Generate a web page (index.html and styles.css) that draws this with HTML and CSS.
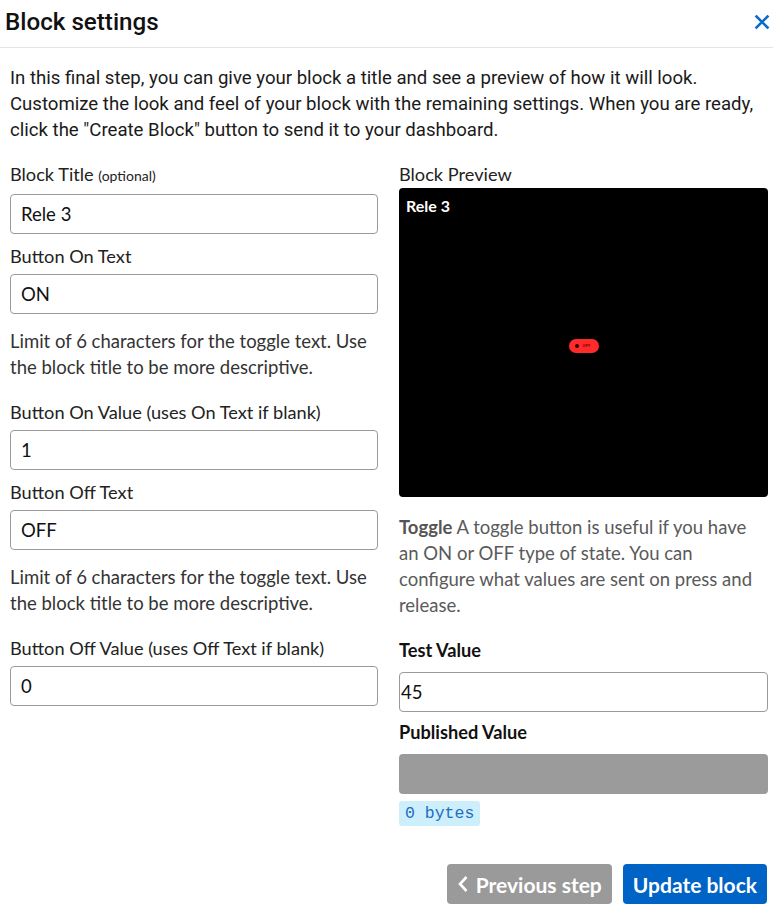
FILE: index.html
```html
<!DOCTYPE html>
<html lang="en">
<head>
<meta charset="utf-8">
<title>Block settings</title>
<link rel="stylesheet" href="styles.css">
</head>
<body>
<div class="modal">
  <header class="modal-header">
    <h1 class="modal-title">Block settings</h1>
    <button class="close-btn" aria-label="Close">
      <svg width="16" height="16" viewBox="0 0 16 16"><path d="M2.5 2.5 L13.5 13.5 M13.5 2.5 L2.5 13.5" stroke="#0a6ccf" stroke-width="2.6" stroke-linecap="square" fill="none"/></svg>
    </button>
  </header>
  <div class="modal-body">
    <p class="intro">In this final step, you can give your block a title and see a preview of how it will look. Customize the look and feel of your block with the remaining settings. When you are ready, click the "Create Block" button to send it to your dashboard.</p>
    <div class="columns">
      <div class="col">
        <div class="field">
          <label class="label">Block Title <small>(optional)</small></label>
          <div class="input">Rele 3</div>
        </div>
        <div class="field">
          <label class="label">Button On Text</label>
          <div class="input">ON</div>
        </div>
        <p class="help">Limit of 6 characters for the toggle text. Use the block title to be more descriptive.</p>
        <div class="field">
          <label class="label">Button On Value (uses On Text if blank)</label>
          <div class="input">1</div>
        </div>
        <div class="field">
          <label class="label">Button Off Text</label>
          <div class="input">OFF</div>
        </div>
        <p class="help">Limit of 6 characters for the toggle text. Use the block title to be more descriptive.</p>
        <div class="field">
          <label class="label">Button Off Value (uses Off Text if blank)</label>
          <div class="input">0</div>
        </div>
      </div>
      <div class="col">
        <label class="label preview-label">Block Preview</label>
        <div class="preview">
          <div class="preview-title">Rele 3</div>
          <div class="preview-center">
            <div class="toggle"><span class="toggle-dot"></span><span class="toggle-text">OFF</span></div>
          </div>
        </div>
        <p class="desc"><b>Toggle</b> A toggle button is useful if you have an ON or OFF type of state. You can configure what values are sent on press and release.</p>
        <label class="label strong">Test Value</label>
        <div class="input input-tight">45</div>
        <label class="label strong pub-label">Published Value</label>
        <div class="published"></div>
        <span class="badge">0 bytes</span>
      </div>
    </div>
    <div class="actions">
      <button class="btn btn-grey"><svg width="12" height="18" viewBox="0 0 12 18"><path d="M9.5 2 L3 9 L9.5 16" stroke="#fff" stroke-width="2.6" fill="none"/></svg>Previous step</button>
      <button class="btn btn-blue">Update block</button>
    </div>
  </div>
</div>
</body>
</html>
```
FILE: styles.css
```css
* { box-sizing: border-box; }
html, body { margin: 0; padding: 0; background: #fff; }
body {
  font-family: Lato, "Open Sans", "Liberation Sans", sans-serif;
  color: #222;
  width: 773px;
}
.modal-header {
  height: 48px;
  border-bottom: 1px solid #e4e4e4;
  display: flex;
  align-items: center;
  justify-content: space-between;
  padding: 0 2px 4px 5px;
}
.modal-title {
  margin: 0;
  font-size: 24.2px;
  font-weight: 500;
  color: #111;
  font-family: Roboto, "Liberation Sans", sans-serif;
}
.close-btn {
  border: 0; background: none; padding: 0; width: 18px; height: 18px;
  display: flex; align-items: center; justify-content: center;
}
.modal-body { padding: 0 5px 0 10px; }
.intro {
  margin: 17px 0 21px;
  font-family: Roboto, "Liberation Sans", sans-serif;
  font-size: 18.6px;
  line-height: 26px;
  color: #1a1a1a;
}
.columns {
  display: grid;
  grid-template-columns: 368px 369px;
  column-gap: 21px;
}
.col { display: flex; flex-direction: column; align-items: stretch; }
.field { display: flex; flex-direction: column; margin-bottom: 12px; }
.label {
  font-size: 18.2px;
  line-height: 20px;
  color: #222;
  margin-bottom: 8px;
  display: block;
}
.label small { font-size: 14px; }
.input {
  height: 40px;
  border: 1px solid #9a9a9a;
  border-radius: 4px;
  padding: 0 10px;
  display: flex;
  align-items: center;
  font-size: 18.5px;
  color: #111;
}
.input-tight { padding-left: 1px; margin-bottom: 10px; }
.help {
  margin: 2px 0 22px;
  font-size: 18.5px;
  line-height: 26px;
  color: #333;
}
.preview-label { margin-bottom: 4px; }
.preview {
  height: 309px;
  background: #000;
  border-radius: 4px;
  display: flex;
  flex-direction: column;
  padding: 9px 7px;
}
.preview-title { color: #fff; font-weight: 700; font-size: 16px; line-height: 18px; }
.preview-center { flex: 1; display: flex; align-items: center; justify-content: center; padding-bottom: 12px; }
.toggle {
  width: 30px; height: 14px; border-radius: 7px; background: #ff2a2a;
  display: flex; align-items: center; padding-left: 6px; gap: 4px;
}
.toggle-dot { width: 4px; height: 4px; border-radius: 50%; background: #300; }
.toggle-text { font-size: 4px; color: #700; font-weight: 700; }
.desc {
  margin: 17px 0 22px;
  font-size: 18.5px;
  line-height: 26px;
  color: #5a5a5a;
}
.desc b { color: #555; }
.strong { font-weight: 700; color: #111; margin-bottom: 12px; }
.pub-label { margin-bottom: 12px; }
.published { height: 40px; background: #9b9b9b; border-radius: 4px; margin-bottom: 7px; }
.badge {
  align-self: flex-start;
  background: #cdeefb;
  color: #1f6fbf;
  font-family: "Liberation Mono", "DejaVu Sans Mono", monospace;
  font-size: 16.5px;
  line-height: 25px;
  padding: 0 6px;
  border-radius: 3px;
}
.actions {
  display: flex;
  justify-content: flex-end;
  gap: 11px;
  margin-top: 38px;
  padding-right: 1px;
}
.btn {
  height: 40px;
  border: 0;
  border-radius: 4px;
  color: #fff;
  font-family: Lato, "Open Sans", sans-serif;
  font-weight: 700;
  font-size: 21px;
  padding: 0 10px;
  display: flex;
  align-items: center;
  gap: 7px;
}
.btn-grey { background: #9a9a9a; }
.btn-blue { background: #0063c6; }
```
